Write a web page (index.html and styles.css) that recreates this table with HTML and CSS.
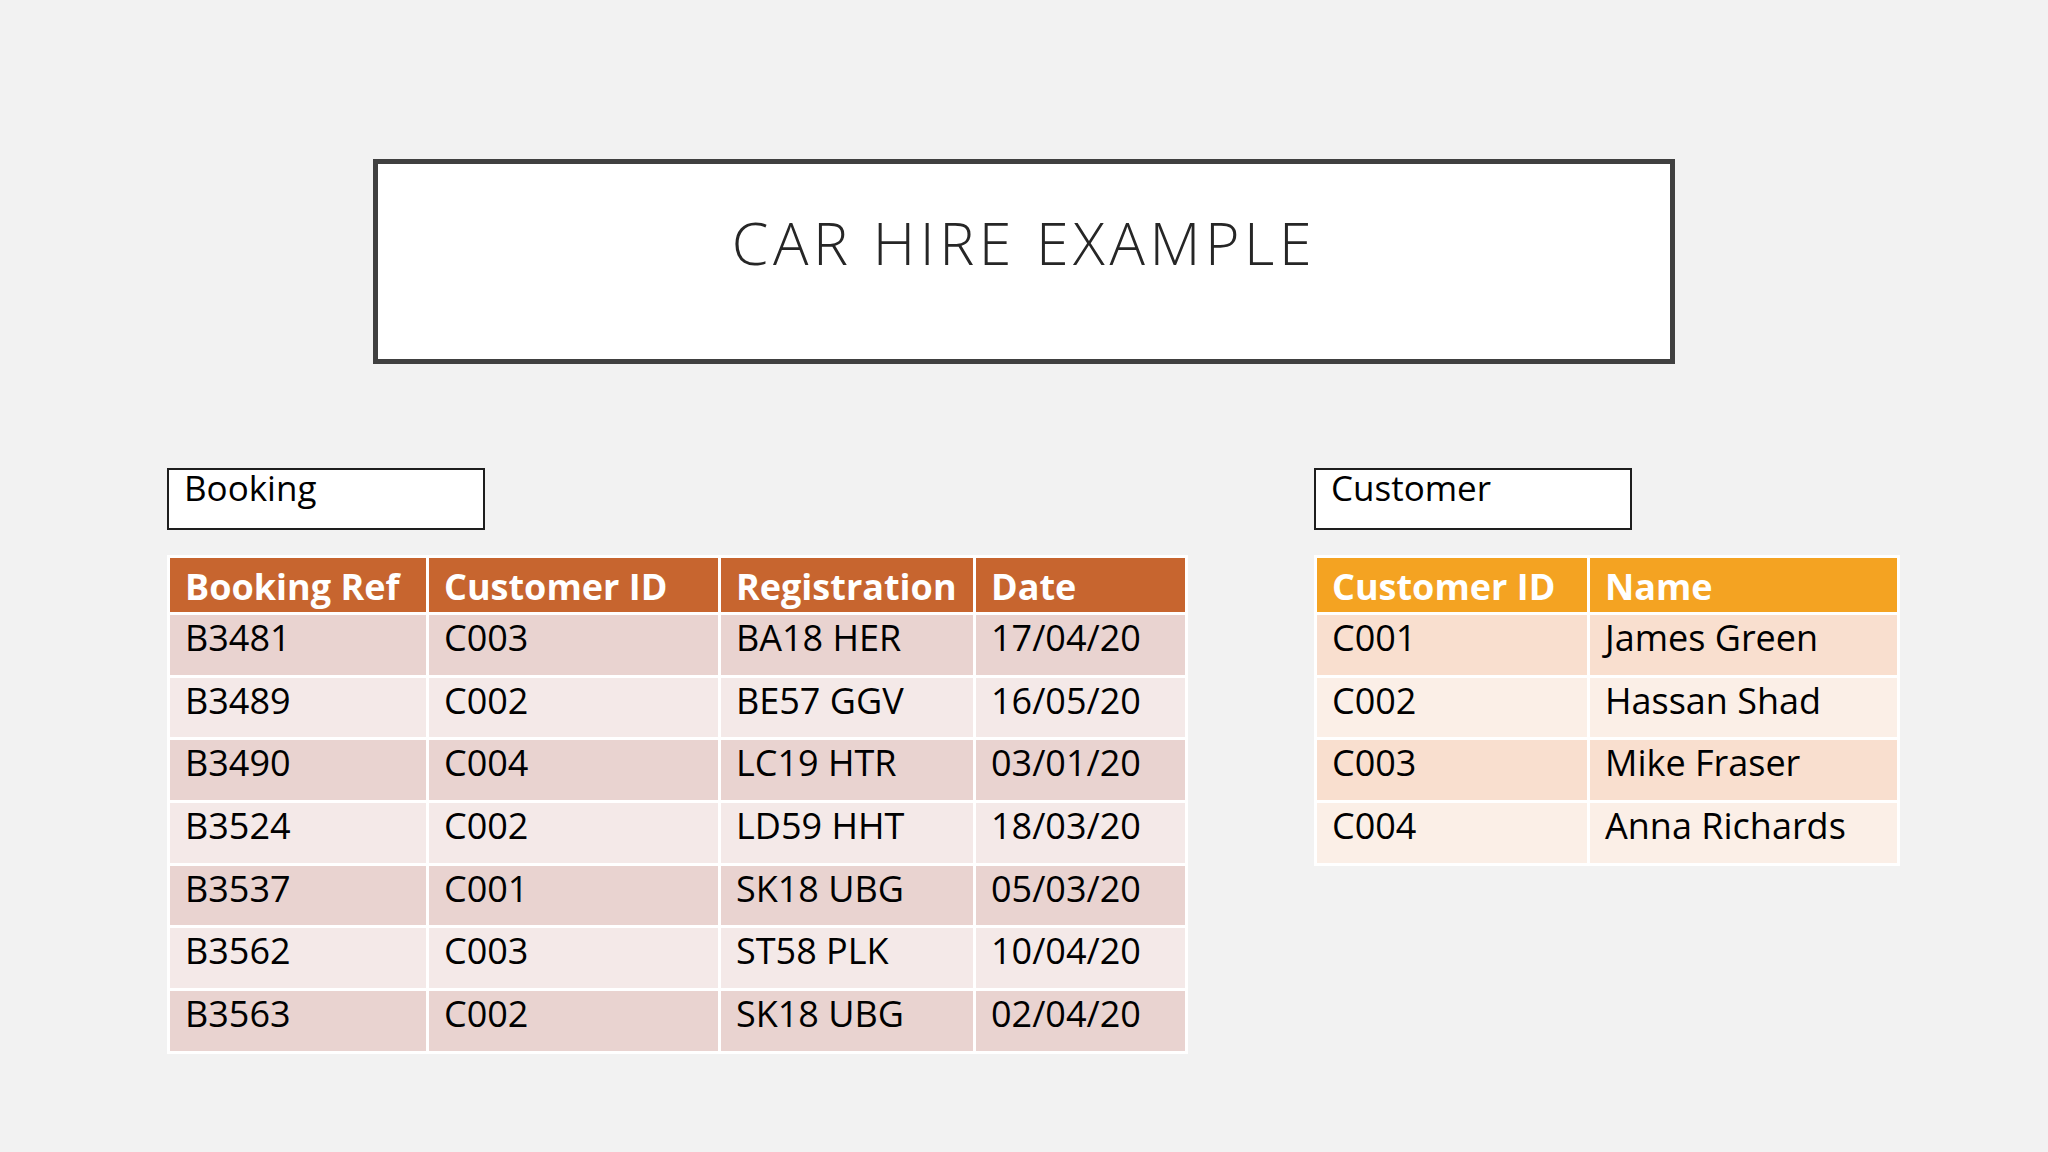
FILE: index.html
```html
<!DOCTYPE html>
<html>
<head>
<meta charset="utf-8">
<link rel="stylesheet" href="styles.css">
</head>
<body>
<div class="slide">
  <div class="title-box"><h1 class="title">CAR HIRE EXAMPLE</h1></div>
  <div class="tables">
    <div class="group">
      <div class="label">Booking</div>
      <table class="tbl booking">
        <colgroup><col class="c1"><col class="c2"><col class="c3"><col class="c4"></colgroup>
        <thead><tr><th>Booking Ref</th><th>Customer ID</th><th>Registration</th><th>Date</th></tr></thead>
        <tbody>
          <tr><td>B3481</td><td>C003</td><td>BA18 HER</td><td>17/04/20</td></tr>
          <tr><td>B3489</td><td>C002</td><td>BE57 GGV</td><td>16/05/20</td></tr>
          <tr><td>B3490</td><td>C004</td><td>LC19 HTR</td><td>03/01/20</td></tr>
          <tr><td>B3524</td><td>C002</td><td>LD59 HHT</td><td>18/03/20</td></tr>
          <tr><td>B3537</td><td>C001</td><td>SK18 UBG</td><td>05/03/20</td></tr>
          <tr><td>B3562</td><td>C003</td><td>ST58 PLK</td><td>10/04/20</td></tr>
          <tr><td>B3563</td><td>C002</td><td>SK18 UBG</td><td>02/04/20</td></tr>
        </tbody>
      </table>
    </div>
    <div class="group">
      <div class="label">Customer</div>
      <table class="tbl customer">
        <colgroup><col class="k1"><col class="k2"></colgroup>
        <thead><tr><th>Customer ID</th><th>Name</th></tr></thead>
        <tbody>
          <tr><td>C001</td><td>James Green</td></tr>
          <tr><td>C002</td><td>Hassan Shad</td></tr>
          <tr><td>C003</td><td>Mike Fraser</td></tr>
          <tr><td>C004</td><td>Anna Richards</td></tr>
        </tbody>
      </table>
    </div>
  </div>
</div>
</body>
</html>
```
FILE: styles.css
```css
html, body {
  margin: 0;
  padding: 0;
}
body {
  background: #f2f2f2;
  font-family: "Open Sans", "Noto Sans", sans-serif;
  color: #000;
}
.slide {
  width: 2048px;
  height: 1152px;
  padding-top: 159px;
  box-sizing: border-box;
}
.title-box {
  margin-left: 373px;
  width: 1302px;
  height: 205px;
  box-sizing: border-box;
  border: 5px solid #404040;
  background: #fff;
  padding-top: 49px;
  text-align: center;
}
.title {
  margin: 0;
  font-family: "Open Sans", sans-serif;
  font-weight: 300;
  font-size: 59px;
  line-height: 1;
  letter-spacing: 4.6px;
  color: #262626;
}
.tables {
  display: flex;
  gap: 126px;
  margin-top: 104px;
  padding-left: 167px;
}
.group {
  display: flex;
  flex-direction: column;
  align-items: flex-start;
}
.label {
  width: 318px;
  height: 62px;
  box-sizing: border-box;
  border: 2px solid #1e1e1e;
  background: #fff;
  padding: 0 15px;
  font-size: 35px;
  line-height: 36px;
  margin-bottom: 25px;
}
.tbl {
  border-collapse: collapse;
  table-layout: fixed;
  font-size: 36px;
}
.tbl th, .tbl td {
  border: 3px solid #fff;
  text-align: left;
  vertical-align: top;
  padding: 0 0 0 15px;
  line-height: 1;
  white-space: nowrap;
}
.tbl th {
  color: #fff;
  font-weight: 700;
  height: 57px;
  box-sizing: border-box;
  padding-top: 11px;
}
.tbl td {
  height: 62.7px;
  box-sizing: border-box;
  padding-top: 5px;
}
.booking { width: 1018px; }
.booking .c1 { width: 259px; }
.booking .c2 { width: 292px; }
.booking .c3 { width: 255px; }
.booking .c4 { width: 212px; }
.booking th { background: #c7652f; }
.booking tbody tr:nth-child(odd) td { background: #e9d3d0; }
.booking tbody tr:nth-child(even) td { background: #f4e9e8; }
.customer { width: 583px; }
.customer .k1 { width: 273px; }
.customer .k2 { width: 310px; }
.customer th { background: #f4a322; }
.customer tbody tr:nth-child(odd) td { background: #f9dfcf; }
.customer tbody tr:nth-child(even) td { background: #fbefe7; }
```
